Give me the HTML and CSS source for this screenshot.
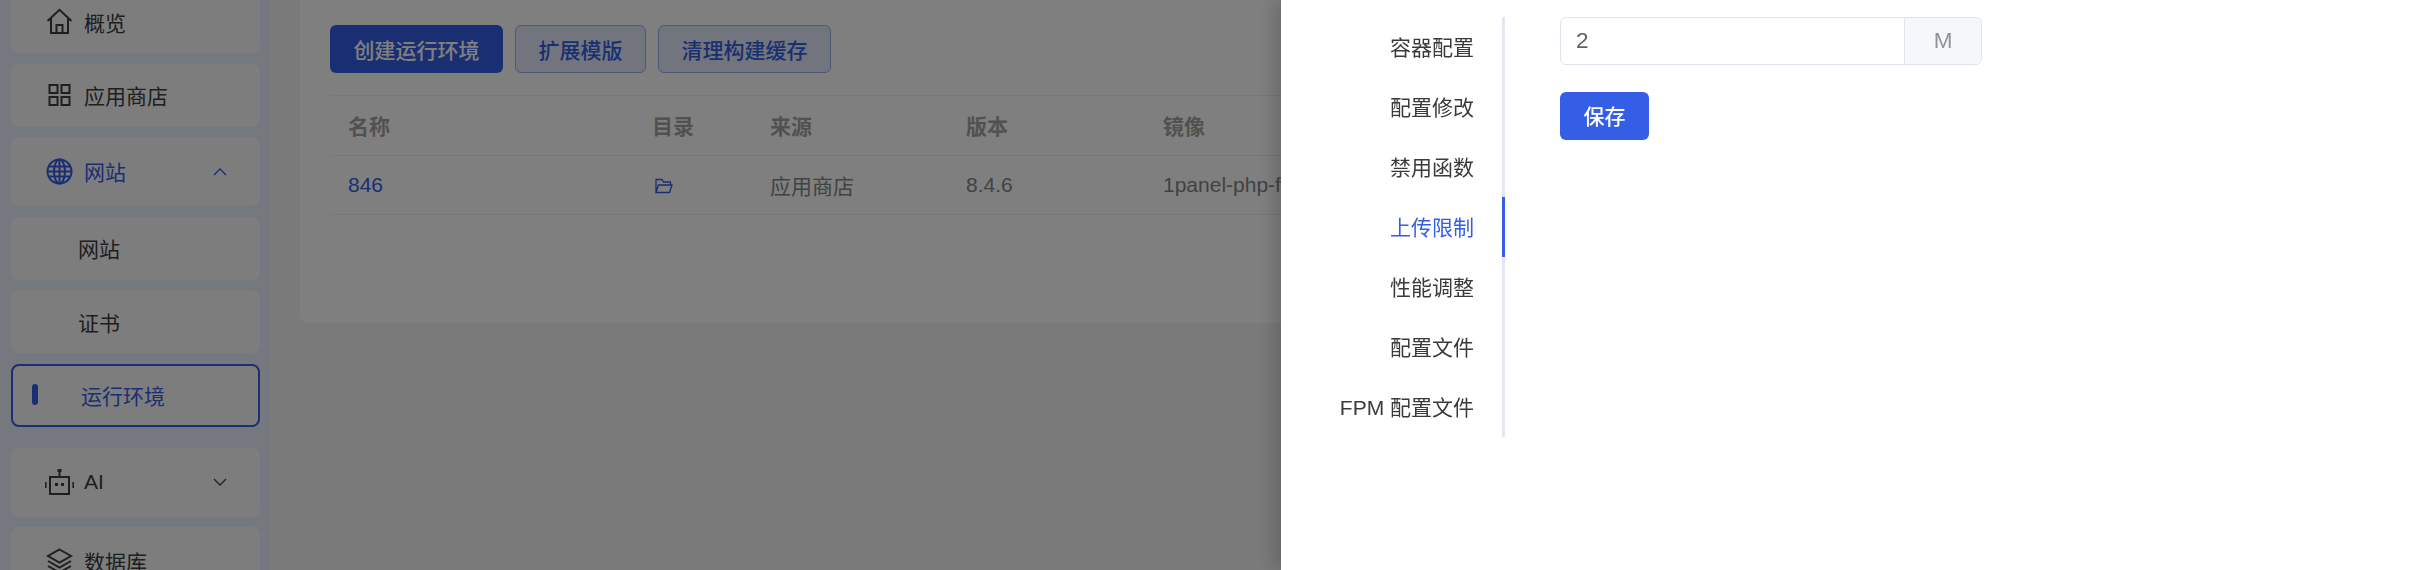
FILE: index.html
```html
<!DOCTYPE html>
<html lang="en">
<head>
    <meta charset="UTF-8">
    <meta name="viewport" content="width=device-width, initial-scale=1.0">
    <title>运行环境</title>
    <link rel="stylesheet" href="styles.css">
</head>
<body>
    <div class="layout">
        <aside class="sidebar">
            <ul class="menu">
                <li class="menu-item">
                    <svg class="menu-icon" viewBox="0 0 27 27"><path d="M1.500 13 13.500 1.800 25.500 13M5 10.500V25h17V10.500M10.500 25v-8h6v8"/></svg>
                    <span>概览</span>
                </li>
                <li class="menu-item">
                    <svg class="menu-icon" viewBox="0 0 27 27"><path d="M3.500 3h8v8h-8zM15.500 3h8v8h-8zM3.500 15h8v8h-8zM15.500 15h8v8h-8z"/></svg>
                    <span>应用商店</span>
                </li>
                <li class="menu-item menu-parent open">
                    <svg class="menu-icon" viewBox="0 0 27 27"><circle cx="13.500" cy="13.500" r="12"/><ellipse cx="13.500" cy="13.500" rx="5.500" ry="12"/><path d="M13.500 1.500v24M2.500 8.500h22M1.500 13.500h24M2.500 18.500h22"/></svg>
                    <span>网站</span>
                    <svg class="chevron" viewBox="0 0 14 8"><path d="M1 7 7 1l6 6"/></svg>
                </li>
                <li class="menu-item sub-item"><span>网站</span></li>
                <li class="menu-item sub-item"><span>证书</span></li>
                <li class="menu-item sub-item active"><i class="active-bar"></i><span>运行环境</span></li>
                <li class="menu-item menu-parent">
                    <svg class="menu-icon wide" viewBox="0 0 31 27"><path d="M6 8h19v17H6zM15.500 8V3"/><path class="solid" d="M13.500 0h4v3h-4zM11 14h3v3h-3zM17 14h3v3h-3zM1 13h1.600v6H1zM28.400 13H30v6h-1.600z"/></svg>
                    <span>AI</span>
                    <svg class="chevron" viewBox="0 0 14 8"><path d="M1 1l6 6 6-6"/></svg>
                </li>
                <li class="menu-item menu-parent database">
                    <svg class="menu-icon" viewBox="0 0 27 27"><path d="M13.500 1.500 25 8 13.500 14.500 2 8zM2 13l11.500 6.500L25 13M2 18l11.500 6.500L25 18"/></svg>
                    <span>数据库</span>
                </li>
            </ul>
        </aside>
        <main class="main">
            <section class="card">
                <div class="toolbar">
                    <button class="btn btn-primary">创建运行环境</button>
                    <button class="btn btn-plain">扩展模版</button>
                    <button class="btn btn-plain">清理构建缓存</button>
                </div>
                <table class="env-table">
                    <thead>
                        <tr>
                            <th class="col-name">名称</th>
                            <th class="col-dir">目录</th>
                            <th class="col-source">来源</th>
                            <th class="col-version">版本</th>
                            <th>镜像</th>
                        </tr>
                    </thead>
                    <tbody>
                        <tr>
                            <td><a class="link">846</a></td>
                            <td>
                                <svg class="folder-icon" viewBox="0 0 18 16"><path d="M1 14.500V1.500h6l1.500 2.500h7v3M1 14.500h13.500L17 7H3.500z"/></svg>
                            </td>
                            <td>应用商店</td>
                            <td>8.4.6</td>
                            <td>1panel-php-fpm:8.4.6</td>
                        </tr>
                    </tbody>
                </table>
            </section>
        </main>
    </div>

    <div class="mask"></div>

    <div class="drawer">
        <ul class="tabs">
            <li>容器配置</li>
            <li>配置修改</li>
            <li>禁用函数</li>
            <li class="active">上传限制</li>
            <li>性能调整</li>
            <li>配置文件</li>
            <li>FPM 配置文件</li>
        </ul>
        <div class="tab-content">
            <div class="input-group">
                <span class="input-value">2</span>
                <span class="input-append">M</span>
            </div>
            <button class="btn btn-save">保存</button>
        </div>
    </div>
</body>
</html>
```

FILE: styles.css
```css
* {
    box-sizing: border-box;
}
html, body {
    height: 100%;
    margin: 0;
    overflow: hidden;
}
body {
    font-family: "Liberation Sans", "Noto Sans CJK SC", sans-serif;
    font-size: 21px;
    color: #424242;
    background-color: #f5f5f5;
}
.layout {
    display: flex;
    height: 100%;
}
.sidebar {
    width: 270px;
    flex-shrink: 0;
    padding: 0 10px 0 11px;
    background-color: #ecf1ff;
}
.menu {
    list-style: none;
    margin: -10px 0 0;
    padding: 0;
    display: flex;
    flex-direction: column;
    gap: 10.5px;
}
.menu-item {
    display: flex;
    align-items: center;
    height: 63px;
    padding-left: 35px;
    background-color: #fafafd;
    border-radius: 8px;
    color: #3e3e3e;
}
.menu-parent {
    height: 69px;
}
.menu-parent.open span,
.menu-parent.database span {
    padding-bottom: 2px;
}
.menu-icon {
    width: 27px;
    height: 27px;
    margin-right: 11px;
    flex-shrink: 0;
    fill: none;
    stroke: currentColor;
    stroke-width: 2;
}
.menu-icon.wide {
    width: 31px;
    margin-left: -2px;
    margin-right: 9px;
}
.menu-icon .solid {
    fill: currentColor;
    stroke: none;
}
.menu-parent.open {
    color: #345ee5;
}
.chevron {
    width: 14px;
    height: 8px;
    margin-left: auto;
    margin-right: 33px;
    fill: none;
    stroke: currentColor;
    stroke-width: 1.3;
}
.sub-item {
    padding-left: 67px;
}
.sub-item.active {
    position: relative;
    margin-bottom: 10.5px;
    border: 2.5px solid #345ee5;
    color: #345ee5;
    padding-left: 68px;
}
.active-bar {
    position: absolute;
    left: 18.5px;
    top: 18px;
    width: 6px;
    height: 21px;
    border-radius: 3px;
    background-color: #345ee5;
}
.main {
    flex: 1;
    padding: 0 30px;
    min-width: 0;
}
.card {
    height: 323px;
    padding: 25px 30px 0;
    background-color: #fff;
    border-radius: 0 0 8px 8px;
}
.toolbar {
    display: flex;
    gap: 12px;
}
.btn {
    height: 48px;
    padding: 0 22.5px;
    border: 1px solid transparent;
    border-radius: 6px;
    font-family: inherit;
    font-size: 21px;
    font-weight: 500;
    cursor: pointer;
}
.btn-primary {
    background-color: #345ee5;
    color: #fff;
}
.btn-plain {
    background-color: #e5ebfb;
    border-color: #9ab1f2;
    color: #345ee5;
}
.env-table {
    width: 100%;
    margin-top: 22px;
    border-collapse: collapse;
    table-layout: fixed;
    color: #858585;
}
.env-table th,
.env-table td {
    height: 59.5px;
    padding: 0 0 0 18px;
    text-align: left;
    white-space: nowrap;
    border-bottom: 1px solid #ebeef5;
}
.env-table th {
    border-top: 1px solid #ebeef5;
    color: #a3a3a3;
    font-weight: 700;
}
.col-name {
    width: 304px;
}
.col-dir {
    width: 118px;
}
.col-source {
    width: 196px;
}
.col-version {
    width: 197px;
}
.link {
    color: #345ee5;
}
.folder-icon {
    display: block;
    width: 18px;
    height: 16px;
    margin: 3px 0 0 3px;
    fill: none;
    stroke: #345ee5;
    stroke-width: 1.3;
}
.mask {
    position: fixed;
    inset: 0;
    background-color: rgba(0, 0, 0, 0.5);
}
.drawer {
    position: fixed;
    top: 0;
    right: 0;
    bottom: 0;
    width: 1141px;
    display: flex;
    padding-top: 17px;
    background-color: #fff;
    box-shadow: -8px 0 16px rgba(0, 0, 0, 0.16);
}
.tabs {
    list-style: none;
    width: 224px;
    height: 420px;
    margin: 0;
    padding: 0;
    border-right: 3px solid #e4e7f2;
    color: #3a3a3a;
}
.tabs li {
    position: relative;
    height: 60px;
    padding-right: 28px;
    line-height: 62px;
    text-align: right;
}
.tabs li.active {
    color: #345ee5;
}
.tabs li.active::after {
    content: "";
    position: absolute;
    top: 0;
    right: -3px;
    width: 3px;
    height: 60px;
    background-color: #345ee5;
}
.tab-content {
    padding-left: 55px;
}
.input-group {
    display: flex;
    width: 422px;
    height: 48px;
    border: 1.5px solid #e0e4ee;
    border-radius: 6px;
    overflow: hidden;
}
.input-value {
    flex: 1;
    padding-left: 15px;
    font-size: 22.5px;
    line-height: 45px;
    color: #606266;
}
.input-append {
    width: 77px;
    border-left: 1.5px solid #e0e4ee;
    background-color: #f5f7fa;
    color: #909399;
    font-size: 22.5px;
    line-height: 45px;
    text-align: center;
}
.btn-save {
    display: block;
    width: 89px;
    margin-top: 27px;
    padding: 0 0 2px;
    background-color: #345ee5;
    color: #fff;
}
```
